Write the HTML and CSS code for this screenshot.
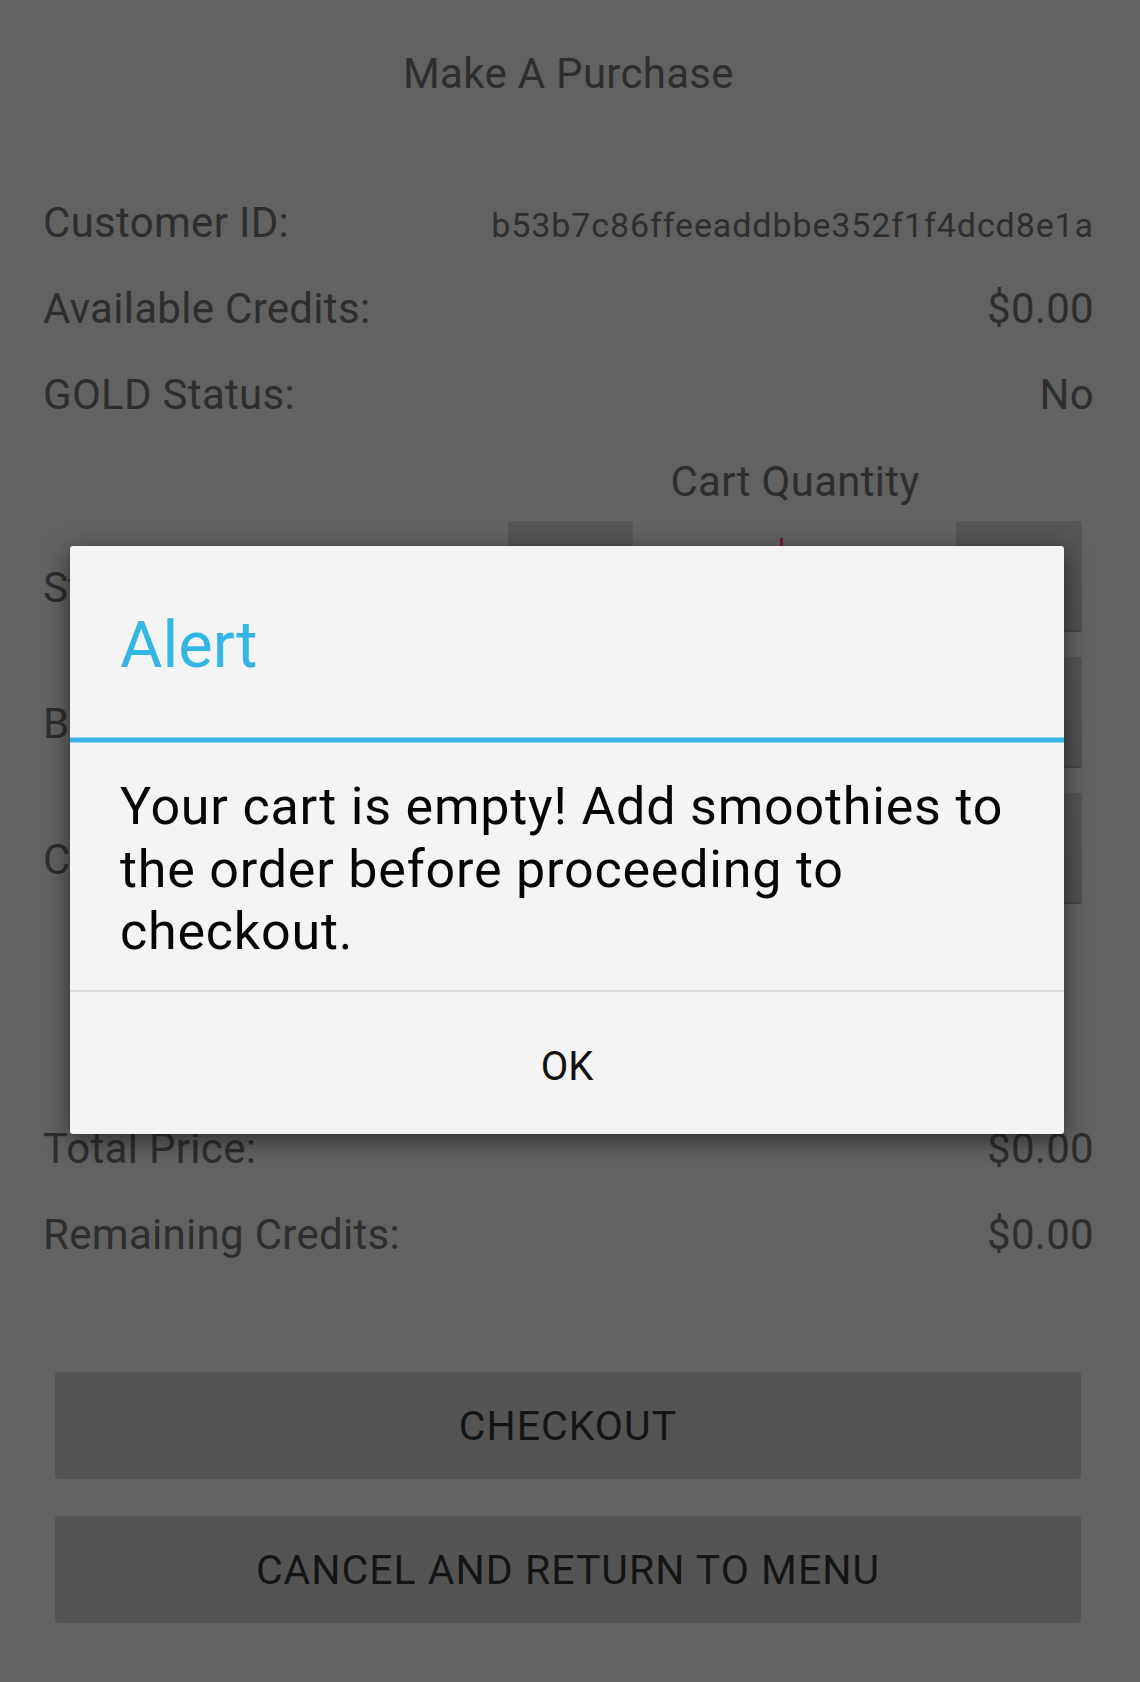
FILE: index.html
```html
<!DOCTYPE html>
<html>
<head>
<meta charset="utf-8">
<title>Make A Purchase</title>
<link rel="stylesheet" href="styles.css">
</head>
<body>
<div class="screen">
  <h1 class="title">Make A Purchase</h1>
  <div class="info">
    <div class="row"><span class="label">Customer ID:</span><span class="value id">b53b7c86ffeeaddbbe352f1f4dcd8e1a</span></div>
    <div class="row"><span class="label">Available Credits:</span><span class="value">$0.00</span></div>
    <div class="row"><span class="label">GOLD Status:</span><span class="value">No</span></div>
  </div>
  <div class="qty-head"><span class="qty-title">Cart Quantity</span></div>
  <div class="products">
    <div class="product">
      <span class="plabel">Strawberry</span>
      <div class="controls">
        <div class="btn-sm minus">-</div>
        <div class="field"><span class="cursor"></span></div>
        <div class="btn-sm plus">+</div>
      </div>
    </div>
    <div class="product">
      <span class="plabel">Banana</span>
      <div class="controls">
        <div class="btn-sm minus">-</div>
        <div class="field"></div>
        <div class="btn-sm plus">+</div>
      </div>
    </div>
    <div class="product">
      <span class="plabel">Chocolate</span>
      <div class="controls">
        <div class="btn-sm minus">-</div>
        <div class="field"></div>
        <div class="btn-sm plus">+</div>
      </div>
    </div>
  </div>
  <div class="summary">
    <div class="row"><span class="label">Total Price:</span><span class="value">$0.00</span></div>
    <div class="row"><span class="label">Remaining Credits:</span><span class="value">$0.00</span></div>
  </div>
  <div class="actions">
    <div class="btn">CHECKOUT</div>
    <div class="btn">CANCEL AND RETURN TO MENU</div>
  </div>
</div>

<div class="dialog">
  <div class="dlg-title">Alert</div>
  <div class="dlg-rule"></div>
  <div class="dlg-msg">Your cart is empty! Add smoothies to the order before proceeding to checkout.</div>
  <div class="dlg-divider"></div>
  <div class="dlg-btn">OK</div>
</div>
</body>
</html>
```

FILE: styles.css
```css
html, body {
  margin: 0;
  padding: 0;
}

body {
  width: 1140px;
  height: 1682px;
  background: #626262;
  font-family: Roboto, "Noto Sans", "Liberation Sans", sans-serif;
  color: #2e2e2e;
  position: relative;
  overflow: hidden;
}

.screen {
  padding: 49px 46px 0 43px;
  letter-spacing: 0.3px;
}

.title {
  margin: 0;
  font-size: 42px;
  font-weight: 400;
  line-height: 50px;
  text-align: center;
}

.info {
  margin-top: 81px;
}

.row {
  display: flex;
  justify-content: space-between;
  align-items: baseline;
  height: 86px;
  line-height: 86px;
  font-size: 42px;
}

.value.id {
  font-size: 34px;
  letter-spacing: 0.9px;
}

.qty-head {
  margin-top: 14px;
  display: flex;
  justify-content: flex-end;
  padding-right: 12px;
}

.qty-title {
  width: 574px;
  text-align: center;
  font-size: 42px;
  line-height: 60px;
}

.products {
  margin-top: 9px;
}

.product {
  display: flex;
  justify-content: space-between;
  height: 136px;
}

.plabel {
  font-size: 42px;
  line-height: 86px;
  padding-top: 24px;
}

.controls {
  display: flex;
  width: 574px;
  height: 111px;
  margin-right: 12px;
}

.btn-sm {
  width: 125px;
  box-sizing: border-box;
  background: linear-gradient(#565656, #525252);
  border-bottom: 2px solid #474747;
  border-radius: 2px;
  font-size: 42px;
  color: #151515;
  display: flex;
  align-items: center;
  justify-content: center;
}

.btn-sm.plus {
  width: 126px;
}

.field {
  flex: 1;
  display: flex;
  justify-content: center;
  align-items: flex-start;
}

.cursor {
  width: 3px;
  height: 48px;
  margin-top: 17px;
  margin-right: 26px;
  background: #76193b;
}

.summary {
  margin-top: 177px;
}

.actions {
  margin-top: 94px;
  display: flex;
  flex-direction: column;
  gap: 37px;
}

.btn {
  height: 107px;
  margin: 0 13px 0 12px;
  background: #545454;
  border-radius: 3px;
  display: flex;
  align-items: center;
  justify-content: center;
  font-size: 41px;
  letter-spacing: 1px;
  color: #141414;
}

.dialog {
  position: absolute;
  left: 70px;
  top: 546px;
  width: 994px;
  background: #f4f4f4;
  border-radius: 3px;
  box-shadow: 0 6px 24px rgba(0, 0, 0, 0.55);
}

.dlg-title {
  padding: 61px 50px 54px;
  font-size: 65px;
  line-height: 76px;
  color: #33b5e5;
}

.dlg-rule {
  height: 6px;
  background: linear-gradient(#8fd3ef 0 1px, #33b5e5 1px 5px, #8fd3ef 5px 6px);
}

.dlg-msg {
  padding: 33px 50px 26.5px;
  font-size: 52px;
  line-height: 62.5px;
  letter-spacing: 0.8px;
  color: #050505;
}

.dlg-divider {
  height: 2px;
  background: #dcdcdc;
}

.dlg-btn {
  height: 142px;
  box-sizing: border-box;
  padding-top: 8px;
  line-height: 134px;
  text-align: center;
  font-size: 40px;
  color: #111;
}
```
